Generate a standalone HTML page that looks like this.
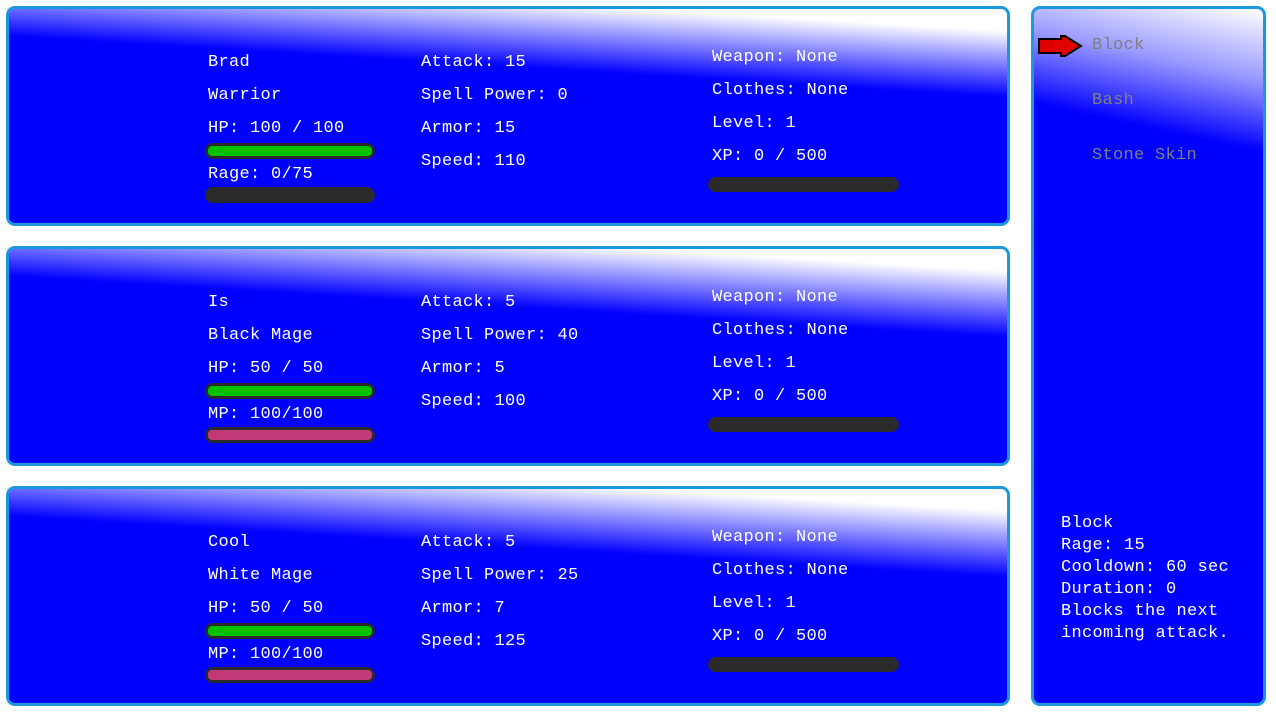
<!DOCTYPE html>
<html><head><meta charset="utf-8"><style>
*{margin:0;padding:0;box-sizing:border-box}
body{width:1276px;height:715px;background:#fff;position:relative;overflow:hidden;font-family:"Liberation Mono",monospace;font-size:17px;color:#fff}
.p{position:absolute;border:3px solid #1a98e0;border-radius:9px;background:#0000ff;overflow:hidden}
.m{left:6px;width:1004px;height:220px;background:linear-gradient(183.5deg,#fff 22px,#0000ff 88px)}
.t{position:absolute;line-height:20px;white-space:nowrap;letter-spacing:0.3px}
.bar{position:absolute;height:16px;border-radius:8px;background:#2a2a2a}
.bar i{position:absolute;left:3px;right:3px;top:3px;bottom:3px;border-radius:4px}
.g{background:#00c000}.mp{background:#c03a78}
.r{left:1031px;top:6px;width:235px;height:700px;background:linear-gradient(192deg,#fff 0px,#9898ff 70px,#0000ff 140px)}
.gr{color:#808080}
</style></head><body>
<div class="p m" style="top:6px"></div>
<div class="p m" style="top:246px"></div>
<div class="p m" style="top:486px"></div>
<div class="p r"></div>

<div class="t" style="left:208px;top:53px">Brad</div>
<div class="t" style="left:208px;top:86px">Warrior</div>
<div class="t" style="left:208px;top:119px">HP: 100 / 100</div>
<div class="bar" style="left:205px;top:143px;width:170px"><i class="g"></i></div>
<div class="t" style="left:208px;top:165px">Rage: 0/75</div>
<div class="bar" style="left:205px;top:187px;width:170px"></div>
<div class="t" style="left:421px;top:53px">Attack: 15</div>
<div class="t" style="left:421px;top:86px">Spell Power: 0</div>
<div class="t" style="left:421px;top:119px">Armor: 15</div>
<div class="t" style="left:421px;top:152px">Speed: 110</div>
<div class="t" style="left:712px;top:48px">Weapon: None</div>
<div class="t" style="left:712px;top:81px">Clothes: None</div>
<div class="t" style="left:712px;top:114px">Level: 1</div>
<div class="t" style="left:712px;top:147px">XP: 0 / 500</div>
<div class="bar" style="left:708px;top:177px;width:191px;height:15px"></div>

<div class="t" style="left:208px;top:293px">Is</div>
<div class="t" style="left:208px;top:326px">Black Mage</div>
<div class="t" style="left:208px;top:359px">HP: 50 / 50</div>
<div class="bar" style="left:205px;top:383px;width:170px"><i class="g"></i></div>
<div class="t" style="left:208px;top:405px">MP: 100/100</div>
<div class="bar" style="left:205px;top:427px;width:170px"><i class="mp"></i></div>
<div class="t" style="left:421px;top:293px">Attack: 5</div>
<div class="t" style="left:421px;top:326px">Spell Power: 40</div>
<div class="t" style="left:421px;top:359px">Armor: 5</div>
<div class="t" style="left:421px;top:392px">Speed: 100</div>
<div class="t" style="left:712px;top:288px">Weapon: None</div>
<div class="t" style="left:712px;top:321px">Clothes: None</div>
<div class="t" style="left:712px;top:354px">Level: 1</div>
<div class="t" style="left:712px;top:387px">XP: 0 / 500</div>
<div class="bar" style="left:708px;top:417px;width:191px;height:15px"></div>

<div class="t" style="left:208px;top:533px">Cool</div>
<div class="t" style="left:208px;top:566px">White Mage</div>
<div class="t" style="left:208px;top:599px">HP: 50 / 50</div>
<div class="bar" style="left:205px;top:623px;width:170px"><i class="g"></i></div>
<div class="t" style="left:208px;top:645px">MP: 100/100</div>
<div class="bar" style="left:205px;top:667px;width:170px"><i class="mp"></i></div>
<div class="t" style="left:421px;top:533px">Attack: 5</div>
<div class="t" style="left:421px;top:566px">Spell Power: 25</div>
<div class="t" style="left:421px;top:599px">Armor: 7</div>
<div class="t" style="left:421px;top:632px">Speed: 125</div>
<div class="t" style="left:712px;top:528px">Weapon: None</div>
<div class="t" style="left:712px;top:561px">Clothes: None</div>
<div class="t" style="left:712px;top:594px">Level: 1</div>
<div class="t" style="left:712px;top:627px">XP: 0 / 500</div>
<div class="bar" style="left:708px;top:657px;width:191px;height:15px"></div>

<svg style="position:absolute;left:1037px;top:34px" width="46" height="24" viewBox="0 0 46 24">
<path d="M2 5 H24 V2 H28 L44 12 L28 22 H24 V19 H2 Z" fill="#e00000" stroke="#000" stroke-width="2"/>
</svg>
<div class="t gr" style="left:1092px;top:36px">Block</div>
<div class="t gr" style="left:1092px;top:91px">Bash</div>
<div class="t gr" style="left:1092px;top:146px">Stone Skin</div>
<div class="t" style="left:1061px;top:513px;line-height:22px">Block<br>Rage: 15<br>Cooldown: 60 sec<br>Duration: 0<br>Blocks the next<br>incoming attack.</div>
</body></html>
